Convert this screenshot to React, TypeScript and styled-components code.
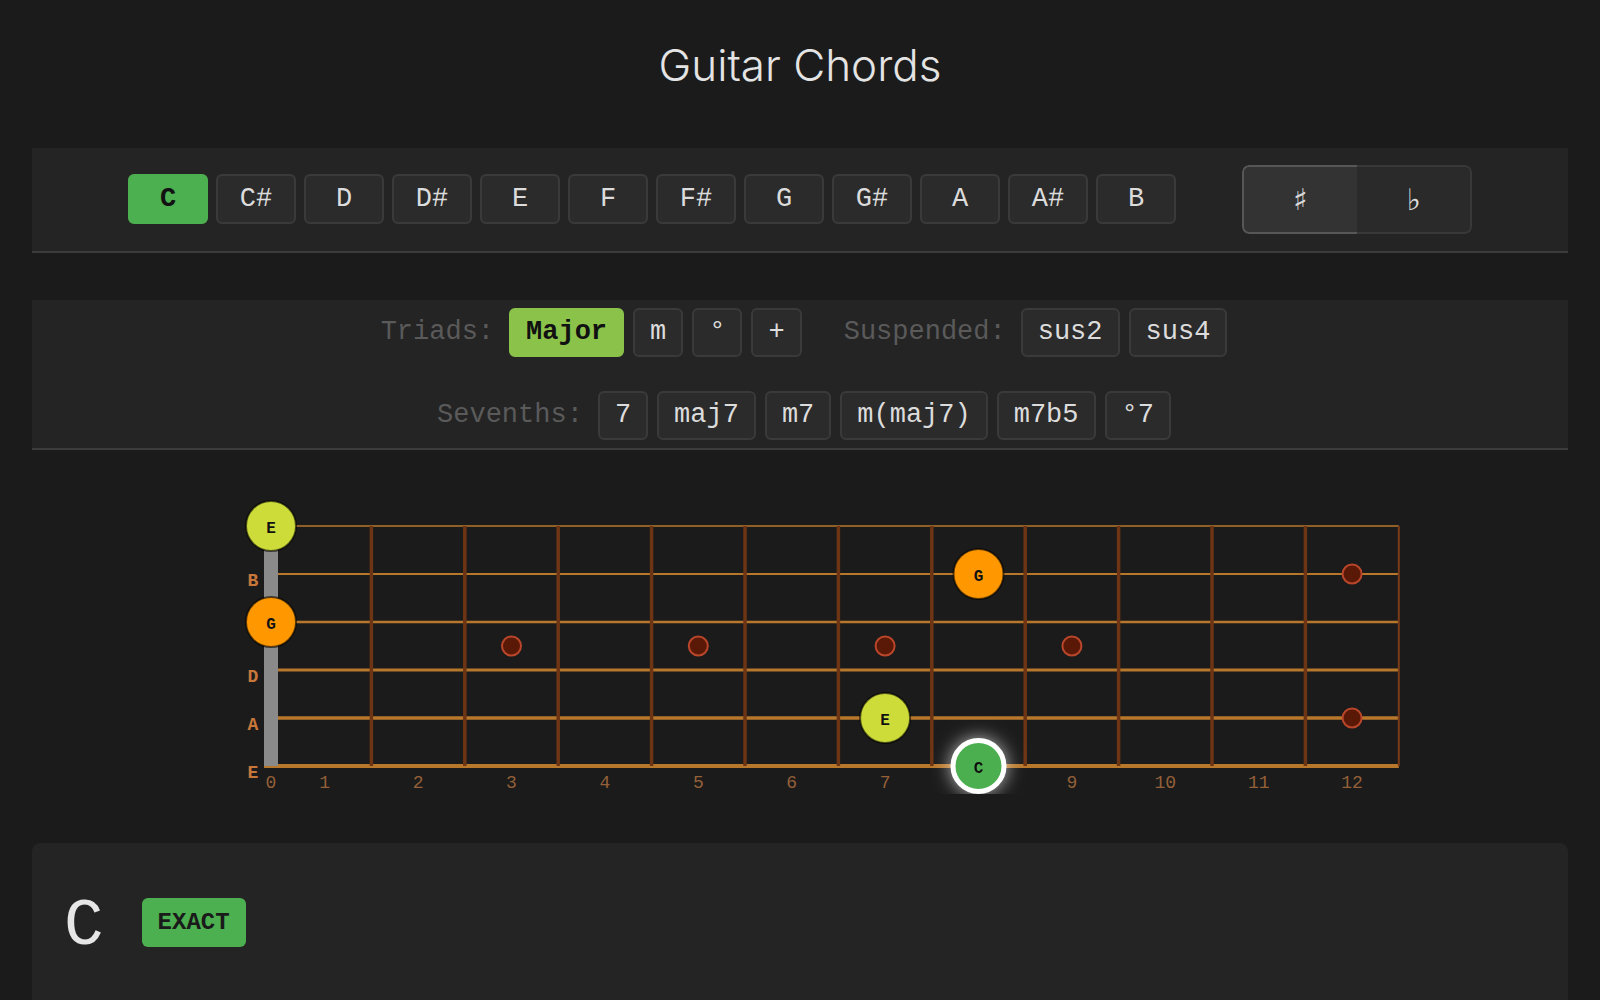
import React, { FC, useState } from 'react'
import styled, { createGlobalStyle } from 'styled-components'

const MONO = `'Liberation Mono', 'DejaVu Sans Mono', monospace`

const GlobalStyle = createGlobalStyle`
  html, body {
    margin: 0;
    padding: 0;
    background: #1b1b1b;
  }
  body {
    font-family: Inter, 'Noto Sans', sans-serif;
    color: #dcdcdc;
  }
`

const NOTES = ['C', 'C#', 'D', 'D#', 'E', 'F', 'F#', 'G', 'G#', 'A', 'A#', 'B']
const TRIADS = ['Major', 'm', '°', '+']
const SUSPENDED = ['sus2', 'sus4']
const SEVENTHS = ['7', 'maj7', 'm7', 'm(maj7)', 'm7b5', '°7']

// fretboard geometry (svg px)
const STRING_Y0 = 36
const STRING_GAP = 48
const NUT_X = 64
const NUT_W = 14
const FRET_X0 = NUT_X + NUT_W
const FRET_W = 93.4
const FRETS = 12
const STRING_NAMES = ['E', 'B', 'G', 'D', 'A', 'E']
const STRING_WIDTHS = [1.5, 2, 2.6, 3, 3.4, 4]

const stringY = (s: number) => STRING_Y0 + STRING_GAP * s
const fretCenter = (f: number) =>
  f === 0 ? NUT_X + NUT_W / 2 : FRET_X0 + FRET_W * (f - 0.5)

type Dot = { fret: number; y: number }
const MID_GD = (stringY(2) + stringY(3)) / 2
const INLAYS: Dot[] = [
  { fret: 3, y: MID_GD },
  { fret: 5, y: MID_GD },
  { fret: 7, y: MID_GD },
  { fret: 9, y: MID_GD },
  { fret: 12, y: stringY(1) },
  { fret: 12, y: stringY(4) },
]

type ChordNote = { string: number; fret: number; name: string; color: string; root?: boolean }
const CHORD: ChordNote[] = [
  { string: 0, fret: 0, name: 'E', color: '#cddc39' },
  { string: 2, fret: 0, name: 'G', color: '#ff9800' },
  { string: 1, fret: 8, name: 'G', color: '#ff9800' },
  { string: 4, fret: 7, name: 'E', color: '#cddc39' },
  { string: 5, fret: 8, name: 'C', color: '#4caf50', root: true },
]

// a note on the low E string sits over the fret number below it
const hiddenFrets = new Set(CHORD.filter((n) => n.string === 5 && n.fret > 0).map((n) => n.fret))

const Fretboard: FC = () => {
  const endX = FRET_X0 + FRET_W * FRETS
  const bottom = stringY(5)
  return (
    <BoardSvg width={1200} height={304} viewBox="0 0 1200 304">
      <defs>
        <filter id="glow" x="-80%" y="-80%" width="260%" height="260%">
          <feGaussianBlur in="SourceAlpha" stdDeviation="9" result="blur" />
          <feFlood floodColor="#ffffff" floodOpacity="0.7" />
          <feComposite in2="blur" operator="in" result="glow" />
          <feMerge>
            <feMergeNode in="glow" />
            <feMergeNode in="SourceGraphic" />
          </feMerge>
        </filter>
      </defs>

      {STRING_NAMES.map((_, s) => (
        <line
          key={`s${s}`}
          x1={NUT_X}
          x2={endX}
          y1={stringY(s)}
          y2={stringY(s)}
          stroke="#b8782c"
          strokeWidth={STRING_WIDTHS[s]}
        />
      ))}

      {Array.from({ length: FRETS - 1 }, (_, i) => {
        const x = FRET_X0 + FRET_W * (i + 1)
        return (
          <line
            key={`f${i}`}
            x1={x}
            x2={x}
            y1={STRING_Y0}
            y2={bottom}
            stroke="#6e3515"
            strokeWidth={3.5}
          />
        )
      })}
      <line x1={endX} x2={endX} y1={STRING_Y0} y2={bottom} stroke="#7a3c18" strokeWidth={2} />

      {INLAYS.map((d, i) => (
        <circle
          key={`d${i}`}
          cx={fretCenter(d.fret)}
          cy={d.y}
          r={9.5}
          fill="#5a1906"
          stroke="#b9462a"
          strokeWidth={2}
        />
      ))}

      <rect x={NUT_X} y={STRING_Y0 - 6} width={NUT_W} height={bottom - STRING_Y0 + 6} fill="#8a8a8a" />

      {STRING_NAMES.map((n, s) => (
        <StringLabel key={`l${s}`} x={53} y={stringY(s) + 12} textAnchor="middle">
          {n}
        </StringLabel>
      ))}

      {Array.from({ length: FRETS + 1 }, (_, f) =>
        hiddenFrets.has(f) ? null : (
          <FretNumber key={`n${f}`} x={fretCenter(f)} y={298} textAnchor="middle">
            {f}
          </FretNumber>
        )
      )}

      {CHORD.map((n, i) => (
        <g key={`c${i}`} filter={n.root ? 'url(#glow)' : undefined}>
          <circle
            cx={fretCenter(n.fret)}
            cy={stringY(n.string)}
            r={n.root ? 25.5 : 25}
            fill={n.color}
            stroke={n.root ? '#ffffff' : 'rgba(0,0,0,0.6)'}
            strokeWidth={n.root ? 5 : 2}
          />
          <NoteText x={fretCenter(n.fret)} y={stringY(n.string) + 7} textAnchor="middle">
            {n.name}
          </NoteText>
        </g>
      ))}
    </BoardSvg>
  )
}

const App: FC = () => {
  const [root, setRoot] = useState('C')
  const [sharp, setSharp] = useState(true)
  const [quality, setQuality] = useState('Major')

  return (
    <Page>
      <GlobalStyle />
      <Title>Guitar Chords</Title>

      <NotePanel>
        <NoteRow>
          {NOTES.map((n) => (
            <NoteButton key={n} $active={n === root} onClick={() => setRoot(n)}>
              {n}
            </NoteButton>
          ))}
        </NoteRow>
        <Toggle>
          <ToggleHalf $active={sharp} onClick={() => setSharp(true)}>
            ♯
          </ToggleHalf>
          <ToggleHalf $active={!sharp} onClick={() => setSharp(false)}>
            ♭
          </ToggleHalf>
        </Toggle>
      </NotePanel>

      <ChordPanel>
        <ChordRow>
          <Group>
            <GroupLabel>Triads:</GroupLabel>
            {TRIADS.map((q) => (
              <TypeButton key={q} $active={q === quality} onClick={() => setQuality(q)}>
                {q}
              </TypeButton>
            ))}
          </Group>
          <Group>
            <GroupLabel>Suspended:</GroupLabel>
            {SUSPENDED.map((q) => (
              <TypeButton key={q} $active={q === quality} onClick={() => setQuality(q)}>
                {q}
              </TypeButton>
            ))}
          </Group>
        </ChordRow>
        <ChordRow>
          <Group>
            <GroupLabel>Sevenths:</GroupLabel>
            {SEVENTHS.map((q) => (
              <TypeButton key={q} $active={q === quality} onClick={() => setQuality(q)}>
                {q}
              </TypeButton>
            ))}
          </Group>
        </ChordRow>
      </ChordPanel>

      <BoardWrap>
        <Fretboard />
      </BoardWrap>

      <ResultPanel>
        <ResultRow>
          <ChordName>C</ChordName>
          <Badge>EXACT</Badge>
        </ResultRow>
      </ResultPanel>
    </Page>
  )
}

export default App

const Page = styled.div`
  padding: 0 32px;
  min-height: 1000px;
  box-sizing: border-box;
  overflow: hidden;
`

const Title = styled.h1`
  margin: 0 0 56px;
  padding-top: 39px;
  font-family: Inter, 'Noto Sans', sans-serif;
  font-weight: 300;
  font-size: 44px;
  line-height: 1.2;
  text-align: center;
  color: #e4e4e4;
`

const NotePanel = styled.div`
  display: flex;
  align-items: center;
  justify-content: center;
  padding: 17px 0;
  background: #242424;
  border-bottom: 2px solid #3c3c3c;
`

const NoteRow = styled.div`
  display: flex;
  gap: 8px;
`

const NoteButton = styled.button<{ $active?: boolean }>`
  width: 80px;
  height: 50px;
  box-sizing: border-box;
  border-radius: 6px;
  border: 2px solid ${(p) => (p.$active ? '#4caf50' : '#3a3a3a')};
  background: ${(p) => (p.$active ? '#4caf50' : '#2b2b2b')};
  color: ${(p) => (p.$active ? '#111' : '#dcdcdc')};
  font-family: ${MONO};
  font-weight: ${(p) => (p.$active ? 700 : 400)};
  font-size: 27px;
  padding: 0;
  cursor: pointer;
`

const Toggle = styled.div`
  display: flex;
  margin-left: 66px;
  height: 69px;
  border-radius: 7px;
  overflow: hidden;
`

const ToggleHalf = styled.button<{ $active?: boolean }>`
  width: 115px;
  height: 100%;
  box-sizing: border-box;
  padding: 0;
  background: ${(p) => (p.$active ? '#333333' : '#2a2a2a')};
  border: 2px solid ${(p) => (p.$active ? '#575757' : '#383838')};
  border-radius: ${(p) => (p.$active ? '7px 0 0 7px' : '0 7px 7px 0')};
  ${(p) => (p.$active ? 'border-right: none;' : 'border-left: none;')}
  color: #dcdcdc;
  font-family: 'DejaVu Sans', sans-serif;
  font-size: 30px;
  cursor: pointer;
`

const ChordPanel = styled.div`
  margin-top: 47px;
  padding: 8px 0;
  display: flex;
  flex-direction: column;
  align-items: center;
  gap: 34px;
  background: #242424;
  border-bottom: 2px solid #3c3c3c;
`

const ChordRow = styled.div`
  display: flex;
  align-items: center;
  gap: 42px;
  padding-left: 8px;
`

const Group = styled.div`
  display: flex;
  align-items: center;
  gap: 9px;
`

const GroupLabel = styled.span`
  font-family: ${MONO};
  font-size: 27px;
  color: #5a5a5a;
  margin-right: 6px;
`

const TypeButton = styled.button<{ $active?: boolean }>`
  height: 49px;
  box-sizing: border-box;
  padding: 0 15px;
  border-radius: 6px;
  border: 2px solid ${(p) => (p.$active ? '#8bc34a' : '#3a3a3a')};
  background: ${(p) => (p.$active ? '#8bc34a' : '#2b2b2b')};
  color: ${(p) => (p.$active ? '#111' : '#dcdcdc')};
  font-family: ${MONO};
  font-weight: ${(p) => (p.$active ? 700 : 400)};
  font-size: 27px;
  cursor: pointer;
`

const BoardWrap = styled.div`
  margin-top: 40px;
  display: flex;
  justify-content: center;
  height: 304px;
`

const BoardSvg = styled.svg`
  display: block;
  overflow: hidden;
`

const StringLabel = styled.text`
  font-family: ${MONO};
  font-weight: 700;
  font-size: 18px;
  fill: #c8773a;
`

const FretNumber = styled.text`
  font-family: ${MONO};
  font-size: 18px;
  fill: #946038;
`

const NoteText = styled.text`
  font-family: ${MONO};
  font-weight: 700;
  font-size: 16px;
  fill: #111;
`

const ResultPanel = styled.div`
  margin-top: 49px;
  min-height: 220px;
  padding: 40px 32px;
  box-sizing: border-box;
  background: #242424;
  border-radius: 8px 8px 0 0;
`

const ResultRow = styled.div`
  display: flex;
  align-items: center;
  gap: 38px;
  min-height: 80px;
`

const ChordName = styled.span`
  font-family: ${MONO};
  font-size: 66px;
  line-height: 1;
  padding-top: 8px;
  color: #e6e6e6;
`

const Badge = styled.span`
  display: flex;
  align-items: center;
  height: 49px;
  padding: 0 16px;
  border-radius: 6px;
  background: #4caf50;
  color: #1a1a1a;
  font-family: ${MONO};
  font-weight: 700;
  font-size: 24px;
`
